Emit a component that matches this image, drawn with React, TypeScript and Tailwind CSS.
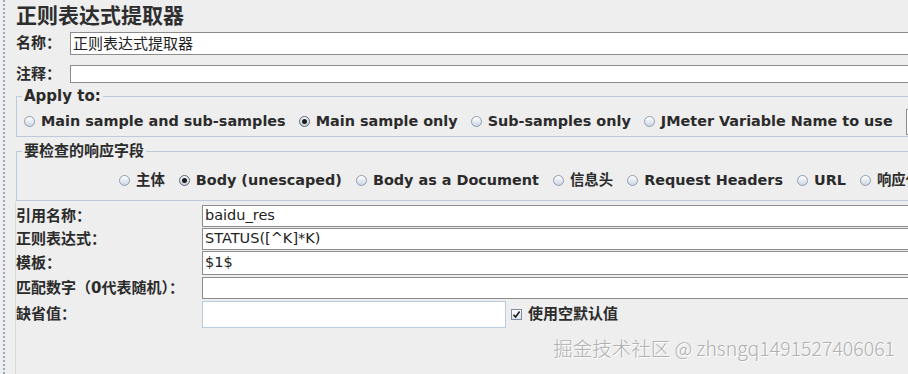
import React from "react";

function Radio({ checked }: { checked?: boolean }) {
  return (
    <span
      className={
        checked
          ? "w-[11px] h-[11px] rounded-full border border-[#5d6675] bg-linear-to-b from-[#f4f6fa] to-[#c9d2df] flex items-center justify-center shrink-0"
          : "w-[11px] h-[11px] rounded-full border border-[#8e9cb0] bg-linear-to-b from-white to-[#cdd7e5] flex items-center justify-center shrink-0"
      }
    >
      {checked && <span className="w-[5px] h-[5px] rounded-full bg-[#1c1c1c]" />}
    </span>
  );
}

function RadioItem({ label, checked }: { label: string; checked?: boolean }) {
  return (
    <div className="flex items-center gap-[6px] shrink-0 whitespace-nowrap">
      <Radio checked={checked} />
      <span>{label}</span>
    </div>
  );
}

function FieldRow({
  label,
  value,
  h,
  mt,
}: {
  label: string;
  value?: string;
  h: string;
  mt: string;
}) {
  return (
    <div className={`flex items-center ${h} ${mt}`}>
      <div className="w-[186px] shrink-0 font-bold text-[15px] whitespace-nowrap">{label}</div>
      <div className="flex-1 h-full border border-[#8c8c8c] bg-white flex items-center pl-[2px] text-[14.5px] font-normal text-[#222]">
        {value}
      </div>
    </div>
  );
}

export default function App() {
  return (
    <div className="w-[908px] h-[374px] bg-[#eeeeee] overflow-hidden flex font-['DejaVu_Sans','Noto_Sans_CJK_SC',sans-serif] text-[#2b2b2b] relative">
      <div className="w-[5px] shrink-0 h-full border-r-2 border-dotted border-[#9aa8c4]" />
      <div className="pl-[11px] w-[1000px] shrink-0 flex flex-col">
        <div className="h-[30px] flex items-center text-[21px] font-bold text-[#2e2e2e] font-['Noto_Sans_CJK_SC',sans-serif]">
          正则表达式提取器
        </div>

        <div className="flex items-center h-[23px] mt-[2px]">
          <div className="w-[54px] shrink-0 font-bold text-[15px]">名称：</div>
          <div className="flex-1 h-full border border-[#8c8c8c] bg-white flex items-center pl-[2px] text-[15px] text-[#222] font-['Noto_Sans_CJK_SC',sans-serif]">
            正则表达式提取器
          </div>
        </div>

        <div className="flex items-center h-[18px] mt-[10px]">
          <div className="w-[54px] shrink-0 font-bold text-[15px]">注释：</div>
          <div className="flex-1 h-full border border-[#8c8c8c] bg-white" />
        </div>

        <fieldset className="mt-[4px] border border-[#bccbdc] pl-[7px] pt-[5px] pb-[2px]">
          <legend className="-ml-[2px] px-[2px] font-bold text-[15px] leading-[18px]">Apply to:</legend>
          <div className="flex items-center h-[24px] gap-[13px] text-[14.4px] font-bold">
            <RadioItem label="Main sample and sub-samples" />
            <RadioItem label="Main sample only" checked />
            <RadioItem label="Sub-samples only" />
            <RadioItem label="JMeter Variable Name to use" />
            <div className="w-[60px] h-[26px] border border-[#8c8c8c] bg-white shrink-0" />
          </div>
        </fieldset>

        <fieldset className="mt-[5px] border border-[#bccbdc] pl-[7px] pt-[9px] pb-[7px]">
          <legend className="-ml-[2px] px-[2px] font-bold text-[15px] leading-[18px]">要检查的响应字段</legend>
          <div className="flex items-center h-[24px] gap-[14px] text-[14.4px] font-bold pl-[95px]">
            <RadioItem label="主体" />
            <RadioItem label="Body (unescaped)" checked />
            <RadioItem label="Body as a Document" />
            <RadioItem label="信息头" />
            <RadioItem label="Request Headers" />
            <RadioItem label="URL" />
            <RadioItem label="响应代码" />
          </div>
        </fieldset>

        <div className="flex-1 flex flex-col border-l border-[#dadada] -ml-[1px]">
          <FieldRow label="引用名称：" value="baidu_res" h="h-[22px]" mt="mt-[4px]" />
          <FieldRow label="正则表达式：" value="STATUS([^K]*K)" h="h-[22px]" mt="mt-[1px]" />
          <FieldRow label="模板：" value="$1$" h="h-[24px]" mt="mt-[1px]" />
          <FieldRow label="匹配数字（0代表随机）：" h="h-[22px]" mt="mt-[2px]" />
          <div className="flex items-center h-[27px] mt-[2px]">
            <div className="w-[186px] shrink-0 font-bold text-[15px] self-start pt-[2px]">缺省值：</div>
            <div className="w-[304px] h-full border border-[#b9cde2] bg-white shrink-0" />
            <div className="flex items-center ml-[5px] gap-[6px]">
              <span className="w-[11px] h-[11px] border border-[#7d8ca2] bg-linear-to-b from-white to-[#dde3ec] flex items-center justify-center">
                <svg width="9" height="9" viewBox="0 0 9 9">
                  <path d="M1.5 4.8 L3.6 7 L7.6 1.6" fill="none" stroke="#1a1a1a" strokeWidth="1.6" />
                </svg>
              </span>
              <span className="font-bold text-[15px]">使用空默认值</span>
            </div>
          </div>
        </div>
      </div>

      <div className="absolute right-[13px] bottom-[12px] text-[19.5px] font-light text-[#b0b0b0] font-['Noto_Sans_CJK_SC',sans-serif] [text-shadow:1px_1px_0_#ffffff]">
        掘金技术社区 @ zhsngq1491527406061
      </div>
    </div>
  );
}
